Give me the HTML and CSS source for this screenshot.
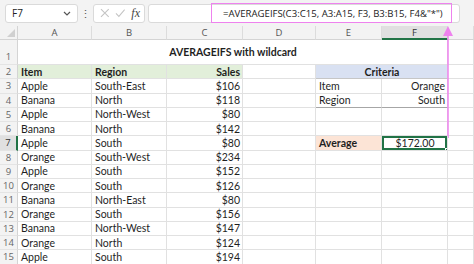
FILE: index.html
```html
<!DOCTYPE html>
<html lang="en">
<head>
  <meta charset="UTF-8">
  <meta name="viewport" content="width=device-width, initial-scale=1.0">
  <title>AVERAGEIFS with wildcard</title>
  <link rel="stylesheet" href="styles.css">
</head>
<body>
  <div class="formula-bar">
    <div class="name-box">
      <span>F7</span>
      <svg class="chevron" width="8" height="5" viewBox="0 0 8 5"><path d="M1 1 L4 4 L7 1" fill="none" stroke="#555" stroke-width="1.2"/></svg>
    </div>
    <div class="dots">&#8942;</div>
    <div class="fx-box">
      <svg width="10" height="10" viewBox="0 0 10 10"><path d="M1 1 L9 9 M9 1 L1 9" stroke="#c4c4c4" stroke-width="1.1"/></svg>
      <svg width="11" height="10" viewBox="0 0 11 10"><path d="M1 5.5 L4 8.5 L10 1.5" fill="none" stroke="#c4c4c4" stroke-width="1.1"/></svg>
      <span class="fx">fx</span>
    </div>
    <div class="formula-input">
      <span class="formula-text">=AVERAGEIFS(C3:C15, A3:A15, F3, B3:B15, F4&amp;"*")</span>
    </div>
  </div>

  <div class="highlight"></div>
  <div class="pointer">
    <svg width="12" height="112" viewBox="0 0 12 112">
      <path d="M6 0 L11 10 L1 10 Z" fill="#ee82ee"/>
      <path d="M6 8 L6 112" stroke="#ee82ee" stroke-width="1.5"/>
    </svg>
  </div>

  <div class="sheet">
    <div class="corner"><span></span></div>
    <div class="col-head">A</div>
    <div class="col-head">B</div>
    <div class="col-head">C</div>
    <div class="col-head">D</div>
    <div class="col-head">E</div>
    <div class="col-head active">F</div>
    <div class="col-head"></div>

    <div class="row-head tall">1</div>
    <div class="cell title">AVERAGEIFS with wildcard</div>
    <div class="cell"></div>

    <div class="row-head">2</div>
    <div class="cell head">Item</div>
    <div class="cell head">Region</div>
    <div class="cell head num">Sales</div>
    <div class="cell"></div>
    <div class="cell crit-head">Criteria</div>
    <div class="cell"></div>

    <div class="row-head">3</div>
    <div class="cell">Apple</div>
    <div class="cell">South-East</div>
    <div class="cell num">$106</div>
    <div class="cell"></div>
    <div class="cell crit">Item</div>
    <div class="cell crit num">Orange</div>
    <div class="cell"></div>

    <div class="row-head">4</div>
    <div class="cell">Banana</div>
    <div class="cell">North</div>
    <div class="cell num">$118</div>
    <div class="cell"></div>
    <div class="cell crit last">Region</div>
    <div class="cell crit last num">South</div>
    <div class="cell"></div>

    <div class="row-head">5</div>
    <div class="cell">Apple</div>
    <div class="cell">North-West</div>
    <div class="cell num">$80</div>
    <div class="cell"></div>
    <div class="cell"></div>
    <div class="cell"></div>
    <div class="cell"></div>

    <div class="row-head">6</div>
    <div class="cell">Banana</div>
    <div class="cell">North</div>
    <div class="cell num">$142</div>
    <div class="cell"></div>
    <div class="cell"></div>
    <div class="cell"></div>
    <div class="cell"></div>

    <div class="row-head active">7</div>
    <div class="cell">Apple</div>
    <div class="cell">South</div>
    <div class="cell num">$80</div>
    <div class="cell"></div>
    <div class="cell avg">Average</div>
    <div class="cell selected">$172.00<i class="handle"></i></div>
    <div class="cell"></div>

    <div class="row-head">8</div>
    <div class="cell">Orange</div>
    <div class="cell">South-West</div>
    <div class="cell num">$234</div>
    <div class="cell"></div>
    <div class="cell"></div>
    <div class="cell"></div>
    <div class="cell"></div>

    <div class="row-head">9</div>
    <div class="cell">Apple</div>
    <div class="cell">South</div>
    <div class="cell num">$152</div>
    <div class="cell"></div>
    <div class="cell"></div>
    <div class="cell"></div>
    <div class="cell"></div>

    <div class="row-head">10</div>
    <div class="cell">Orange</div>
    <div class="cell">South</div>
    <div class="cell num">$126</div>
    <div class="cell"></div>
    <div class="cell"></div>
    <div class="cell"></div>
    <div class="cell"></div>

    <div class="row-head">11</div>
    <div class="cell">Banana</div>
    <div class="cell">North-East</div>
    <div class="cell num">$80</div>
    <div class="cell"></div>
    <div class="cell"></div>
    <div class="cell"></div>
    <div class="cell"></div>

    <div class="row-head">12</div>
    <div class="cell">Orange</div>
    <div class="cell">South</div>
    <div class="cell num">$156</div>
    <div class="cell"></div>
    <div class="cell"></div>
    <div class="cell"></div>
    <div class="cell"></div>

    <div class="row-head">13</div>
    <div class="cell">Banana</div>
    <div class="cell">North-West</div>
    <div class="cell num">$147</div>
    <div class="cell"></div>
    <div class="cell"></div>
    <div class="cell"></div>
    <div class="cell"></div>

    <div class="row-head">14</div>
    <div class="cell">Orange</div>
    <div class="cell">North</div>
    <div class="cell num">$124</div>
    <div class="cell"></div>
    <div class="cell"></div>
    <div class="cell"></div>
    <div class="cell"></div>

    <div class="row-head">15</div>
    <div class="cell">Apple</div>
    <div class="cell">South</div>
    <div class="cell num">$194</div>
    <div class="cell"></div>
    <div class="cell"></div>
    <div class="cell"></div>
    <div class="cell"></div>
  </div>
</body>
</html>
```

FILE: styles.css
```css
:root {
  --grid: #e1e1e1;
  --verde: #217346;
  --rosa: #ee82ee;
  --texto: #1f1f1f;
}

body {
  margin: 0;
  background: #ffffff;
  font-family: 'Open Sans', 'Noto Sans', sans-serif;
  color: var(--texto);
  overflow: hidden;
}

/* formula bar */
.formula-bar {
  display: flex;
  align-items: center;
  height: 26px;
  padding: 0 0 0 5px;
  box-sizing: border-box;
  background: #f3f3f3;
}

.name-box, .fx-box, .formula-input {
  height: 19px;
  box-sizing: border-box;
  background: #ffffff;
  border: 1px solid #dadada;
  border-radius: 3px;
  display: flex;
  align-items: center;
}

.name-box {
  width: 73px;
  padding: 0 6px;
  justify-content: space-between;
  font-size: 10px;
  color: #222;
}

.dots {
  width: 15px;
  text-align: center;
  font-size: 11px;
  color: #555;
}

.fx-box {
  width: 52px;
  padding: 0 4px 0 6px;
  gap: 5px;
}

.fx {
  font-family: 'Liberation Serif', serif;
  font-style: italic;
  font-size: 12px;
  color: #444;
  margin-left: 1px;
}

.formula-input {
  flex: 1;
  margin-left: 3px;
  margin-right: 14px;
  padding-left: 74px;
  font-size: 9.6px;
  color: #222;
  white-space: nowrap;
}

.highlight {
  position: absolute;
  left: 211px;
  top: 3px;
  width: 241px;
  height: 20px;
  box-sizing: border-box;
  border: 1.5px solid var(--rosa);
}

.pointer {
  position: absolute;
  left: 442px;
  top: 26px;
  line-height: 0;
}

/* sheet grid */
.sheet {
  display: grid;
  grid-template-columns: 18px 74px 75px 76px 73px 66px 66px 1fr;
  grid-template-rows: 14px 25px repeat(14, 14.25px);
  font-family: 'Lato', 'Open Sans', sans-serif;
  font-size: 10.5px;
}

.corner {
  background: #f3f3f3;
  border-right: 1px solid #d4d4d4;
  border-bottom: 1px solid #d4d4d4;
  position: relative;
}

.corner span {
  position: absolute;
  right: 2px;
  bottom: 2px;
  width: 0;
  height: 0;
  border-left: 8px solid transparent;
  border-bottom: 8px solid #d0d0d0;
}

.col-head {
  background: #f3f3f3;
  border-right: 1px solid #dcdcdc;
  border-bottom: 1px solid #d4d4d4;
  color: #555;
  font-family: 'Open Sans', sans-serif;
  font-size: 9.5px;
  text-align: center;
  line-height: 13px;
}

.col-head.active {
  background: #e0e0e0;
  border-bottom: 2px solid var(--verde);
  color: #333;
}

.row-head {
  background: #f3f3f3;
  border-bottom: 1px solid #e4e4e4;
  border-right: 1px solid #d4d4d4;
  color: #666;
  font-family: 'Open Sans', sans-serif;
  font-size: 9.5px;
  text-align: center;
  display: flex;
  align-items: center;
  justify-content: center;
}

.row-head.tall {
  align-items: flex-end;
  padding-bottom: 1px;
}

.row-head.active {
  background: #e0e0e0;
  border-right: 2px solid var(--verde);
  color: #333;
}

.cell {
  border-right: 1px solid var(--grid);
  border-bottom: 1px solid var(--grid);
  padding: 0 2px 0 3px;
  display: flex;
  align-items: center;
  white-space: nowrap;
  overflow: hidden;
  min-width: 0;
}

.num {
  justify-content: flex-end;
}

.title {
  grid-column: span 6;
  justify-content: center;
  font-weight: 700;
}

.head {
  background: #e2efda;
  font-weight: 700;
}

.crit-head {
  grid-column: span 2;
  justify-content: center;
  background: #d9e1f2;
  font-weight: 700;
  border-bottom-color: #c6c6c6;
}

.crit.last {
  border-bottom-color: #a6a6a6;
}

.avg {
  background: #fce4d6;
  font-weight: 700;
}

.selected {
  position: relative;
  justify-content: center;
  box-shadow: inset 0 0 0 2px var(--verde);
}

.handle {
  position: absolute;
  right: -3px;
  bottom: -3px;
  width: 5px;
  height: 5px;
  background: var(--verde);
  border: 1px solid #ffffff;
  box-sizing: border-box;
}
```
